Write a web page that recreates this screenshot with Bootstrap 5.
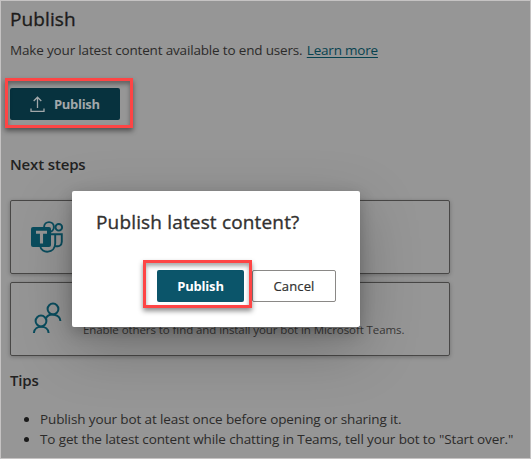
<!DOCTYPE html>
<html lang="en">
<head>
<meta charset="utf-8">
<title>Publish</title>
<link href="https://cdn.jsdelivr.net/npm/bootstrap@5.3.0/dist/css/bootstrap.min.css" rel="stylesheet">
<style>
body{width:531px;height:459px;margin:0;background:#969696;color:#2c2b2a;font:14px/20px "Open Sans","Noto Sans",sans-serif;overflow:hidden}
.page{width:531px;height:459px;border:1px solid #c5c3c3;padding:6px 9px 0}
.page-title{font-size:19px;line-height:24px;font-weight:500;letter-spacing:.1px;margin:0;color:#1d1c1b;-webkit-text-stroke:.35px}
.intro{font-size:13.5px;letter-spacing:-.17px;margin:9px 0 0}
.intro a{color:#07424f;text-underline-offset:2px;margin-left:1px;letter-spacing:-.2px}
.pub{width:110px;height:32px;margin-top:28px;padding:0 20px;background:#07323e;color:#a2a8aa;font-weight:700;font-size:13px;line-height:20px;letter-spacing:-.3px;border:0;border-radius:2px}
.section-title{font-size:15px;line-height:20px;font-weight:600;letter-spacing:-.15px;margin:34px 0 0;color:#222}
.steps{margin-top:26px}
.step{width:440px;height:74px;border:1px solid #484746;border-radius:2px;box-shadow:0 1px 4px rgba(0,0,0,.25)}
.step svg{width:36px;height:36px;margin-left:19px}
.step-text{font-size:11.5px;line-height:16px;letter-spacing:-.08px;color:#393837;margin:39px 0 0 17px;white-space:nowrap}
.tips-title{margin-top:14px}
.tips{margin:19px 0 0;padding-left:30px;font-size:13.5px;line-height:20px;letter-spacing:-.12px}
.tips li::marker{color:#1a1a1a}
.dialog-box{left:72px;top:191px;width:288px;height:136px;background:#fff;border-radius:2px;padding:19px 24px 25px;box-shadow:0 20px 58px rgba(0,0,0,.25),0 5px 15px rgba(0,0,0,.22)}
.dialog-title{font-size:19px;line-height:24px;font-weight:500;letter-spacing:.16px;color:#323130;margin:0;white-space:nowrap;-webkit-text-stroke:.35px}
.dialog-box .btn{height:32px;padding:0;border-radius:2px;font-size:13px;line-height:20px}
.go{width:87px;background:#0b556a;color:#fff;font-weight:700;letter-spacing:-.2px}
.go:hover{background:#0b556a;color:#fff}
.cancel{width:84px;border:1px solid #8a8886;color:#323130;font-weight:500;letter-spacing:.15px;-webkit-text-stroke:.2px}
.ring{border:3px solid #fe4545;box-shadow:0 3px 5px rgba(0,0,0,.45),inset 0 3px 4px rgba(0,0,0,.35);pointer-events:none}
.ring-a{left:5px;top:78px;width:128px;height:50px}
.ring-b{left:143px;top:260px;width:109px;height:48px}
</style>
<script src="https://cdn.jsdelivr.net/npm/bootstrap@5.3.0/dist/js/bootstrap.bundle.min.js"></script>
</head>
<body class="position-relative">
<main class="page">
  <h1 class="page-title">Publish</h1>
  <p class="intro">Make your latest content available to end users. <a href="#">Learn more</a></p>
  <button class="btn pub d-flex align-items-center gap-2" type="button">
    <svg width="16" height="16" viewBox="0 0 16 16" fill="none" stroke="currentColor" stroke-width="1.3"><path d="M7.5 12V1.2M3.7 5l3.8-3.8L11.3 5M1 12.5v2.8h13v-2.8"/></svg>
    <span>Publish</span>
  </button>
  <h2 class="section-title">Next steps</h2>
  <div class="steps d-flex flex-column gap-2">
    <div class="step d-flex align-items-center">
      <svg viewBox="0 0 36 36" fill="none" stroke="#0a4d5e" stroke-width="1.9"><circle cx="19" cy="8" r="4.9"/><circle cx="28.8" cy="8.3" r="3.3"/><path d="M20 15.3h5.2v8.9c0 10.6-14 11-15 2.8M25.2 15.3h6.6v7.5c0 4-3.3 5.2-6.6 4"/><rect x="1" y="8" width="20" height="20" rx="2" fill="#0a4d5e" stroke="none"/><path d="M6 13.2h11M11.5 13.2v11.3" stroke="#969696" stroke-width="3.1"/></svg>
    </div>
    <div class="step d-flex align-items-start">
      <svg class="align-self-center" viewBox="0 0 36 36" fill="none" stroke="#0a4d5e" stroke-width="2"><circle cx="23" cy="8" r="5.4"/><circle cx="11" cy="20" r="5.4"/><path d="M3.9 32c.5-8.2 14.2-8.2 14.7 0M16 17.2c3.4-6 13.9-4.2 14.4 2.8"/></svg>
      <p class="step-text">Enable others to find and install your bot in Microsoft Teams.</p>
    </div>
  </div>
  <h2 class="section-title tips-title">Tips</h2>
  <ul class="tips">
    <li>Publish your bot at least once before opening or sharing it.</li>
    <li>To get the latest content while chatting in Teams, tell your bot to "Start over."</li>
  </ul>
</main>
<section class="dialog-box position-absolute d-flex flex-column justify-content-between" role="dialog">
  <h2 class="dialog-title">Publish latest content?</h2>
  <div class="d-flex justify-content-end gap-2">
    <button class="btn go" type="button">Publish</button>
    <button class="btn cancel" type="button">Cancel</button>
  </div>
</section>
<div class="ring ring-a position-absolute"></div>
<div class="ring ring-b position-absolute"></div>
</body>
</html>
